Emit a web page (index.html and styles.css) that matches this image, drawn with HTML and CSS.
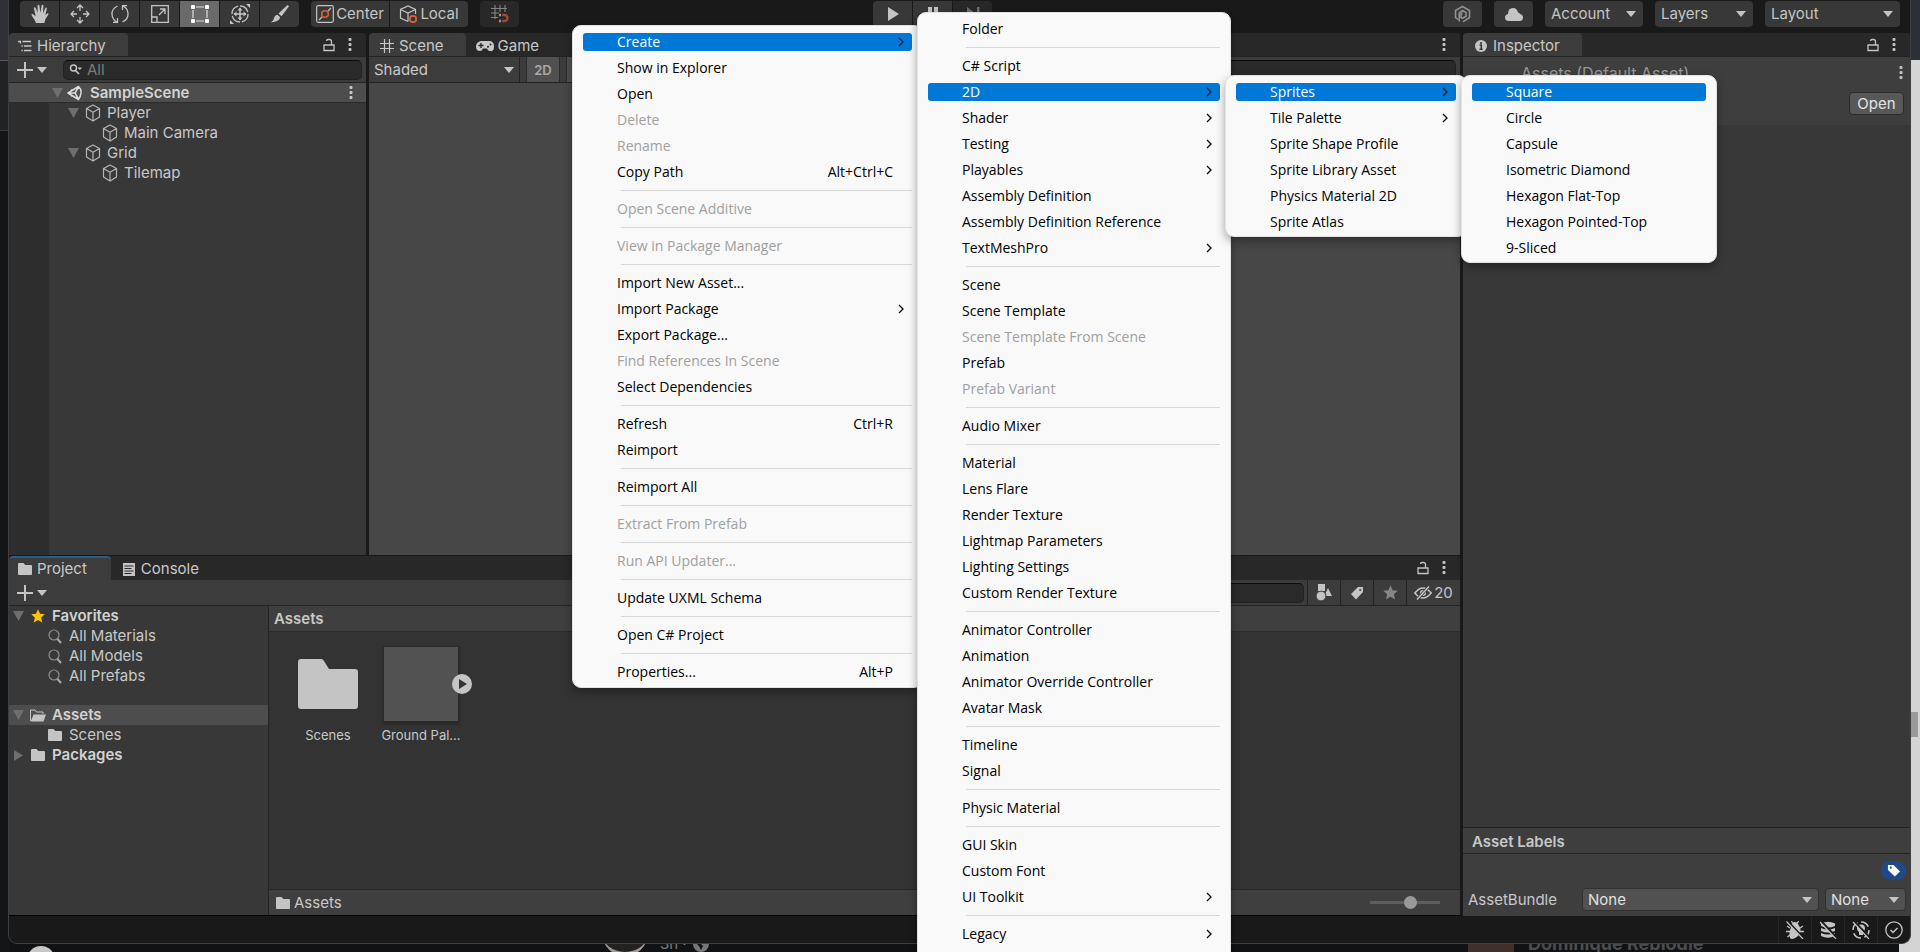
FILE: index.html
```html
<!DOCTYPE html>
<html lang="en">
<head>
<meta charset="utf-8">
<title>Unity Editor</title>
<link rel="stylesheet" href="styles.css">
</head>
<body>
<svg class="sprite" aria-hidden="true">
  <symbol id="i-caret" viewBox="0 0 10 6"><path d="M0 0h10L5 6z" fill="currentColor"/></symbol>
  <symbol id="i-fold" viewBox="0 0 11 10"><path d="M0 0h11L5.500 10z" fill="#6e6e6e"/></symbol>
  <symbol id="i-folded" viewBox="0 0 11 11"><path d="M1 0v11L10 5.500z" fill="#6e6e6e"/></symbol>
  <symbol id="i-chev" viewBox="0 0 6 10"><path d="M1 1l4 4-4 4" fill="none" stroke="currentColor" stroke-width="1.300"/></symbol>
  <symbol id="i-dots" viewBox="0 0 4 14"><g fill="currentColor"><rect x=".5" y="0" width="3" height="3" rx="1"/><rect x=".5" y="5" width="3" height="3" rx="1"/><rect x=".5" y="10" width="3" height="3" rx="1"/></g></symbol>
  <symbol id="i-lock" viewBox="0 0 12 14"><path d="M1 7h10v5.500H1zM8.500 7V3.500Q8.500 1.500 6.500 1.500H5Q3.500 1.500 3.500 3" fill="none" stroke="currentColor" stroke-width="1.300"/></symbol>
  <symbol id="i-plus" viewBox="0 0 16 16"><path d="M8 0v16M0 8h16" stroke="currentColor" stroke-width="2"/></symbol>
  <symbol id="i-find" viewBox="0 0 14 12"><circle cx="4.500" cy="4" r="3" fill="none" stroke="currentColor" stroke-width="1.400"/><path d="M6.500 6.500L10 10" stroke="currentColor" stroke-width="1.600"/><path d="M8.500 3.500h4.500L10.800 6z" fill="currentColor"/></symbol>
  <symbol id="i-query" viewBox="0 0 14 15"><circle cx="6" cy="6" r="5" fill="none" stroke="#8d8d8d" stroke-width="1.200"/><path d="M9.500 10l3.500 4" stroke="#a9a9a9" stroke-width="2"/></symbol>
  <symbol id="i-folder" viewBox="0 0 14 12"><path d="M0 1Q0 0 1 0h4.500l1.800 2H13q1 0 1 1v8q0 1-1 1H1q-1 0-1-1z" fill="#c4c4c4"/></symbol>
  <symbol id="i-open" viewBox="0 0 16 13"><path d="M.5 12V1h4.500l1.500 2H13v2" fill="none" stroke="#c4c4c4"/><path d="M3.500 5.500H16L13.500 12.500H.8z" fill="#c4c4c4"/></symbol>
  <symbol id="i-cube" viewBox="0 0 16 18"><path d="M8 1l6.500 3.500v8.500L8 17l-6.500-4V4.500zM1.500 4.500L8 8.300l6.500-3.800M8 8.300V17" fill="none" stroke="#b4b4b4" stroke-width="1.200" stroke-linejoin="round"/></symbol>
  <symbol id="i-unity" viewBox="0 0 16 16"><path d="M1 8L11.500 1.500Q14.500 4 14 8T11.500 14.500zM1 8h7M8 8l3.500-6M8 8l3.500 6M5 4.800L2 8l3 3.200" fill="none" stroke="#dcdcdc" stroke-width="1.500" stroke-linejoin="round"/></symbol>
  <symbol id="i-tree" viewBox="0 0 14 12"><path d="M0 1.500h3M4.500 1.500H13M6 6h7.500M6 10.500h7.500M3.500 6h1.300M3.500 10.500h1.300M2.500 2v1.500" stroke="currentColor" stroke-width="1.300"/></symbol>
  <symbol id="i-grid" viewBox="0 0 14 14"><path d="M4.500 0v14M9.500 0v14M0 4.500h14M0 9.500h14" stroke="currentColor" stroke-width="1.200"/></symbol>
  <symbol id="i-pad" viewBox="0 0 18 12"><path d="M5 1h8q5 0 5 5.500T14 11q-2 0-3-2.500H7Q6 11 4 11 0 11 0 6.500T5 1z" fill="currentColor"/><path d="M5 3v5M2.500 5.500h5" stroke="#282828" stroke-width="1.400"/><circle cx="12" cy="6.800" r="1" fill="#282828"/><circle cx="14.500" cy="4.500" r="1" fill="#282828"/></symbol>
  <symbol id="i-doc" viewBox="0 0 12 13"><path d="M0 0h12v13H0z" fill="#c4c4c4"/><path d="M1.500 3h9M1.500 5.500h7M1.500 8h9M1.500 10.500h7" stroke="#282828"/></symbol>
  <symbol id="i-info" viewBox="0 0 12 12"><circle cx="6" cy="6" r="6" fill="#c4c4c4"/><path d="M6 2v2M4.500 5h1.800v4M4.500 9.300h3" stroke="#333" stroke-width="1.500" fill="none"/></symbol>
  <symbol id="i-star" viewBox="0 0 14 14"><path d="M7 .3l2 4.500 4.800.5-3.600 3.300 1 4.900L7 11l-4.200 2.500 1-4.900L.2 5.300 5 4.800z" fill="currentColor"/></symbol>
  <symbol id="i-tag" viewBox="0 0 14 14"><path d="M8 1h4.500q.5 0 .5.500V6L6 13.500 1 8z" fill="currentColor"/><circle cx="10.200" cy="4" r="1" fill="#3c3c3c"/></symbol>
  <symbol id="i-shapes" viewBox="0 0 16 17"><path d="M2 0h7v7H2z" fill="currentColor"/><circle cx="5" cy="12" r="4.800" fill="currentColor" stroke="#3c3c3c" stroke-width=".8"/><path d="M12 4l4 8h-5.500l-.8-3z" fill="currentColor"/></symbol>
  <symbol id="i-eye" viewBox="0 0 18 14"><path d="M.8 7Q5 2 9 2t8.200 5Q13 12 9 12T.8 7z" fill="none" stroke="currentColor" stroke-width="1.500"/><circle cx="9" cy="7" r="3" fill="currentColor"/><path d="M2.500 14L15.500 0" stroke="#3c3c3c" stroke-width="3"/><path d="M3 13.500L15 .5" stroke="currentColor" stroke-width="1.500"/></symbol>
  <symbol id="i-hand" viewBox="0 0 18 20"><path d="M5 19Q4 16 1.800 13.200L.3 10.600q.8-1.200 2.200-.1L4.800 12.500 2.900 4.200q.3-1.400 1.700-.5L6.700 9 6.500 1.500Q7.300.2 8.400 1.400L9.300 8.700 10.700 1.200q1-1 1.800.3L12 9.300l2.500-5.600q1.300-.5 1.400.7L14.300 11l2.200-1.800q1.200-.2 1 1.100L14.500 15l-1.200 4z" fill="currentColor"/></symbol>
  <symbol id="i-move" viewBox="0 0 20 20"><path d="M10 1v6M10 13v6M1 10h6M13 10h6M7 4l3-3 3 3M7 16l3 3 3-3M4 7l-3 3 3 3M16 7l3 3-3 3" fill="none" stroke="currentColor" stroke-width="1.300"/></symbol>
  <symbol id="i-rot" viewBox="0 0 20 20"><path d="M7.500 2Q1.500 5 2 10.500T7 18M3 18.300h4.500V14M12.500 18Q18.500 15 18 9.500T13 2M17 1.700h-4.500V6" fill="none" stroke="currentColor" stroke-width="1.300"/></symbol>
  <symbol id="i-scale" viewBox="0 0 18 18"><path d="M.7.700h16.600v16.600H.7zM.7 12H6v5.300M8 10l5.500-5.500M9 4h5v5" fill="none" stroke="currentColor" stroke-width="1.300"/></symbol>
  <symbol id="i-rect" viewBox="0 0 18 18"><path d="M5 2h8M5 16h8M2 5v8M16 5v8" stroke="#ddd" stroke-width="1.200"/><g fill="#fff"><rect width="4" height="4" rx="1"/><rect x="14" width="4" height="4" rx="1"/><rect y="14" width="4" height="4" rx="1"/><rect x="14" y="14" width="4" height="4" rx="1"/></g></symbol>
  <symbol id="i-trs" viewBox="0 0 20 20"><circle cx="10" cy="10" r="8" fill="none" stroke="currentColor" stroke-width="1.300" stroke-dasharray="10.500 2"/><path d="M10 4v12M4 10h12" stroke="currentColor" stroke-width="1.500"/><path d="M7.500 6.500L10 3.500l2.500 3zM7.500 13.500l2.500 3 2.500-3zM6.500 7.500L3.500 10l3 2.500zM13.500 7.500l3 2.500-3 2.500z" fill="currentColor"/><path d="M16 0h4v4zM0 16v4h4z" fill="currentColor"/></symbol>
  <symbol id="i-brush" viewBox="0 0 18 18"><path d="M16.500 0l1.500 1.200-7.500 10-3-2.600zM6.500 9.800l2.700 2.400Q8.500 16.500 0 17.500 3 15.500 3.200 12.500 4 10 6.500 9.800z" fill="currentColor"/></symbol>
  <symbol id="i-pivot" viewBox="0 0 18 18"><rect x=".7" y=".7" width="16.600" height="16.600" rx="1.500" fill="none" stroke="#c4c4c4" stroke-width="1.200"/><circle cx="9" cy="9" r="3.300" fill="none" stroke="#e0603a" stroke-width="1.600"/><path d="M3 15l3-3M12 6l3-3" stroke="#c4c4c4" stroke-width="1.300"/></symbol>
  <symbol id="i-local" viewBox="0 0 19 19"><path d="M9 16.500L1.500 13V4.500L9 1l7.500 3.500V9M1.500 4.500L9 8l7.500-3.500M9 8v8.500" fill="none" stroke="#c4c4c4" stroke-width="1.200"/><circle cx="14" cy="14" r="3.200" fill="#383838" stroke="#e0603a" stroke-width="1.700"/></symbol>
  <symbol id="i-snap" viewBox="0 0 18 18"><path d="M4 0v14M9 0v7M14 0v7M0 3.500h16M0 8h8M0 12.500h7" stroke="#848484" stroke-width="1.100" fill="none"/><path d="M11 10h2.500a3 3 0 010 6H11" fill="none" stroke="#9c4a33" stroke-width="2.400"/><path d="M9 8.800v2.400M9 14.800v2.400" stroke="#999" stroke-width="2"/></symbol>
  <symbol id="i-play" viewBox="0 0 12 14"><path d="M1 0l11 7-11 7z" fill="currentColor"/></symbol>
  <symbol id="i-pause" viewBox="0 0 12 14"><path d="M1 0h4v14H1zM7 0h4v14H7z" fill="currentColor"/></symbol>
  <symbol id="i-step" viewBox="0 0 14 14"><path d="M1 0l9 7-9 7zM11 0h2.500v14H11z" fill="currentColor"/></symbol>
  <symbol id="i-plastic" viewBox="0 0 17 18"><path d="M4 14.500L1.500 12.500v-7L8.500 1.500l7 4v7L9 16.800M5.200 16.500V7.800L8.500 5.500l3.500 2v3.800L8.500 13.300l-1.500-.8V9l1.500-1" fill="none" stroke="#8f8f8f" stroke-width="1.600"/></symbol>
  <symbol id="i-cloud" viewBox="0 0 18 13"><path d="M4 13Q0 13 0 9.500 0 6.500 3 6 3 0 8 0 12 0 13 4.500 14.500 4.500 15 6 18 6.500 18 9.500 18 13 14.500 13z" fill="#c4c4c4"/></symbol>
  <symbol id="i-bug" viewBox="0 0 18 18"><path d="M9 1Q12 1 12.500 4 14.500 6 14.500 10T9 17 3.500 14 3.500 10 5.500 4Q6 1 9 1z" fill="#c4c4c4"/><path d="M1 5l3 2M17 5l-3 2M0 10.500h4M14 10.500h4M1.500 16l3-2.500M16.500 16l-3-2.500M5.500 0l1 2M12.500 0l-1 2" stroke="#c4c4c4" stroke-width="1.300"/><path d="M1.500 0l16 17" stroke="#191919" stroke-width="2"/><path d="M.5.500l16.500 17.500" stroke="#c4c4c4" stroke-width="1.200"/></symbol>
  <symbol id="i-db" viewBox="0 0 18 18"><path d="M2 2.500Q9-1 16 2.500V5Q9 8 2 5zM2 7q7 3 14 0v3q-7 3-14 0zM2 12q7 3 14 0v3q-7 3.500-14 0z" fill="#c4c4c4"/><path d="M2 0l16 17" stroke="#191919" stroke-width="2.200"/><path d="M1 1l16 17" stroke="#c4c4c4" stroke-width="1.200"/></symbol>
  <symbol id="i-gi" viewBox="0 0 18 18"><circle cx="9" cy="9" r="8" fill="none" stroke="#c4c4c4" stroke-width="1.500" stroke-dasharray="9 3.500"/><path d="M9 3.500q4 0 4 4 0 2-2 3.500V14H7v-3Q5 9.500 5 7.500q0-4 4-4z" fill="#c4c4c4"/><path d="M2 0l16 17" stroke="#191919" stroke-width="2"/><path d="M1 1l16 17" stroke="#c4c4c4" stroke-width="1.200"/></symbol>
  <symbol id="i-ok" viewBox="0 0 18 18"><circle cx="9" cy="9" r="8.200" fill="none" stroke="#c4c4c4" stroke-width="1.300"/><path d="M5.500 9l2.500 2.500 4.500-4.500" fill="none" stroke="#c4c4c4" stroke-width="1.500"/></symbol>
</svg>

<div class="backdrop" aria-hidden="true">
  <div class="back-left"></div>
  <div class="back-right"><div class="back-thumb"></div></div>
  <div class="back-disc"></div>
  <div class="back-post"><span class="back-avatar"></span><span>3h ·</span><svg width="16" height="16" viewBox="0 0 16 16"><circle cx="8" cy="8" r="8" fill="#777"/><path d="M4 3l5 1-2 3 3 3-2 4-2-4-3-3z" fill="#111"/></svg></div>
  <div class="back-name"><span class="back-photo"></span><span>Dominique Reblodie</span></div>
</div>

<div class="editor">
  <header class="toolbar">
    <div class="group">
      <button class="tool" aria-label="Hand"><svg width="18" height="20"><use href="#i-hand"/></svg></button>
      <button class="tool" aria-label="Move"><svg width="20" height="20"><use href="#i-move"/></svg></button>
      <button class="tool" aria-label="Rotate"><svg width="20" height="20"><use href="#i-rot"/></svg></button>
      <button class="tool" aria-label="Scale"><svg width="18" height="18"><use href="#i-scale"/></svg></button>
      <button class="tool tool-on" aria-label="Rect"><svg width="18" height="18"><use href="#i-rect"/></svg></button>
      <button class="tool" aria-label="Transform"><svg width="20" height="20"><use href="#i-trs"/></svg></button>
      <button class="tool" aria-label="Custom"><svg width="18" height="18"><use href="#i-brush"/></svg></button>
    </div>
    <div class="group">
      <button class="tool tool-text"><svg width="18" height="18"><use href="#i-pivot"/></svg>Center</button>
      <button class="tool tool-text"><svg width="19" height="19"><use href="#i-local"/></svg>Local</button>
    </div>
    <div class="group"><button class="tool tool-off" aria-label="Snap"><svg width="18" height="18"><use href="#i-snap"/></svg></button></div>
    <div class="gap-a"></div>
    <div class="group">
      <button class="tool" aria-label="Play"><svg width="12" height="14"><use href="#i-play"/></svg></button>
      <button class="tool" aria-label="Pause"><svg width="12" height="14"><use href="#i-pause"/></svg></button>
      <button class="tool tool-off" aria-label="Step"><svg width="14" height="14"><use href="#i-step"/></svg></button>
    </div>
    <div class="gap-b"></div>
    <button class="tool tool-solo" aria-label="Plastic SCM"><svg width="17" height="18"><use href="#i-plastic"/></svg></button>
    <button class="tool tool-solo" aria-label="Cloud"><svg width="18" height="13"><use href="#i-cloud"/></svg></button>
    <button class="tool tool-drop">Account<svg width="10" height="6"><use href="#i-caret"/></svg></button>
    <button class="tool tool-drop">Layers<svg width="10" height="6"><use href="#i-caret"/></svg></button>
    <button class="tool tool-drop tool-wide">Layout<svg width="10" height="6"><use href="#i-caret"/></svg></button>
  </header>

  <main class="dock">
    <div class="dock-main">
      <div class="dock-top">
        <section class="panel hierarchy">
          <div class="tabs">
            <button class="tab tab-on"><svg width="14" height="12"><use href="#i-tree"/></svg>Hierarchy</button>
            <span class="tabs-end"><svg width="12" height="14"><use href="#i-lock"/></svg><svg width="4" height="14"><use href="#i-dots"/></svg></span>
          </div>
          <div class="bar">
            <button class="add" aria-label="Create"><svg width="16" height="16"><use href="#i-plus"/></svg><svg width="10" height="6"><use href="#i-caret"/></svg></button>
            <label class="search"><svg width="14" height="12"><use href="#i-find"/></svg><input type="text" placeholder="All" aria-label="Search hierarchy"></label>
          </div>
          <div class="scene-row"><svg width="11" height="10"><use href="#i-fold"/></svg><svg width="16" height="16"><use href="#i-unity"/></svg><b>SampleScene</b><svg class="end" width="4" height="14"><use href="#i-dots"/></svg></div>
          <div class="scene-tree">
            <ul class="objects">
              <li class="obj"><svg width="11" height="10"><use href="#i-fold"/></svg><svg width="16" height="18"><use href="#i-cube"/></svg>Player</li>
              <li class="obj obj-child"><svg width="16" height="18"><use href="#i-cube"/></svg>Main Camera</li>
              <li class="obj"><svg width="11" height="10"><use href="#i-fold"/></svg><svg width="16" height="18"><use href="#i-cube"/></svg>Grid</li>
              <li class="obj obj-child"><svg width="16" height="18"><use href="#i-cube"/></svg>Tilemap</li>
            </ul>
          </div>
        </section>
        <section class="panel scene">
          <div class="tabs">
            <button class="tab tab-on tab-scene"><svg width="14" height="14"><use href="#i-grid"/></svg>Scene</button>
            <button class="tab tab-game"><svg width="18" height="12"><use href="#i-pad"/></svg>Game</button>
            <span class="tabs-end"><svg width="4" height="14"><use href="#i-dots"/></svg></span>
          </div>
          <div class="bar bar-scene">
            <button class="shading">Shaded<svg width="10" height="6"><use href="#i-caret"/></svg></button>
            <button class="mode">2D</button>
            <button class="mode" aria-label="Lighting"></button>
            <label class="search search-scene"><input type="text" placeholder="All" aria-label="Search scene"></label>
          </div>
          <div class="viewport"></div>
        </section>
      </div>
      <section class="panel project">
        <div class="tabs">
          <button class="tab tab-on tab-focus"><svg width="14" height="12"><use href="#i-folder"/></svg>Project</button>
          <button class="tab tab-console"><svg width="12" height="13"><use href="#i-doc"/></svg>Console</button>
          <span class="tabs-end"><svg width="12" height="14"><use href="#i-lock"/></svg><svg width="4" height="14"><use href="#i-dots"/></svg></span>
        </div>
        <div class="bar bar-project">
          <button class="add" aria-label="Create asset"><svg width="16" height="16"><use href="#i-plus"/></svg><svg width="10" height="6"><use href="#i-caret"/></svg></button>
          <label class="search search-project"><input type="text" aria-label="Search project"></label>
          <button class="filter" aria-label="Search by type"><svg width="16" height="17"><use href="#i-shapes"/></svg></button>
          <button class="filter" aria-label="Search by label"><svg width="14" height="14"><use href="#i-tag"/></svg></button>
          <button class="filter filter-dim" aria-label="Save search"><svg width="15" height="15"><use href="#i-star"/></svg></button>
          <button class="filter filter-count"><svg width="18" height="14"><use href="#i-eye"/></svg>20</button>
        </div>
        <div class="browser">
          <ul class="folders">
            <li class="node"><svg width="11" height="10"><use href="#i-fold"/></svg><svg class="gold" width="14" height="14"><use href="#i-star"/></svg><b>Favorites</b></li>
            <li class="node node-child"><svg width="14" height="15"><use href="#i-query"/></svg>All Materials</li>
            <li class="node node-child"><svg width="14" height="15"><use href="#i-query"/></svg>All Models</li>
            <li class="node node-child"><svg width="14" height="15"><use href="#i-query"/></svg>All Prefabs</li>
            <li class="node node-on"><svg width="11" height="10"><use href="#i-fold"/></svg><svg width="16" height="13"><use href="#i-open"/></svg><b>Assets</b></li>
            <li class="node node-child"><svg width="14" height="12"><use href="#i-folder"/></svg>Scenes</li>
            <li class="node"><svg width="11" height="11"><use href="#i-folded"/></svg><svg width="14" height="12"><use href="#i-folder"/></svg><b>Packages</b></li>
          </ul>
          <div class="contents">
            <div class="crumbs">Assets</div>
            <div class="assets">
              <figure class="asset"><div class="thumb"><svg width="60" height="50" viewBox="0 0 60 50"><path d="M0 3Q0 0 3 0h20q2 0 3 2l5 8h26q3 0 3 3v34q0 3-3 3H3q-3 0-3-3z" fill="#c4c4c4"/></svg></div><figcaption>Scenes</figcaption></figure>
              <figure class="asset"><div class="thumb thumb-tile"><svg class="expand" width="20" height="20" viewBox="0 0 20 20"><circle cx="10" cy="10" r="10" fill="#c4c4c4"/><path d="M7 5l8 5-8 5z" fill="#333"/></svg></div><figcaption>Ground Pal...</figcaption></figure>
            </div>
            <div class="path"><svg width="14" height="12"><use href="#i-folder"/></svg>Assets<input class="zoom" type="range" min="0" max="100" value="60" aria-label="Icon size"></div>
          </div>
        </div>
      </section>
    </div>

    <section class="panel inspector">
      <div class="tabs">
        <button class="tab tab-on tab-info"><svg width="12" height="12"><use href="#i-info"/></svg>Inspector</button>
        <span class="tabs-end"><svg width="12" height="14"><use href="#i-lock"/></svg><svg width="4" height="14"><use href="#i-dots"/></svg></span>
      </div>
      <div class="asset-head">
        <div class="asset-title"><svg class="asset-icon" width="14" height="12"><use href="#i-folder"/></svg><span>Assets (Default Asset)</span><svg class="end" width="4" height="14"><use href="#i-dots"/></svg></div>
        <button class="open">Open</button>
      </div>
      <div class="inspector-body"></div>
      <div class="labels-head">Asset Labels</div>
      <div class="labels-body">
        <button class="label-add" aria-label="Add label"><svg width="13" height="13" viewBox="0 0 14 14"><path d="M1 1h6l7 7-5.500 5.500L1 6.500z" fill="#fff"/><circle cx="4" cy="4" r="1.200" fill="#204a87"/></svg></button>
        <div class="bundle">
          <label for="bundle">AssetBundle</label>
          <span class="pick pick-grow"><select id="bundle"><option>None</option></select><svg width="10" height="6"><use href="#i-caret"/></svg></span>
          <span class="pick"><select aria-label="AssetBundle variant"><option>None</option></select><svg width="10" height="6"><use href="#i-caret"/></svg></span>
        </div>
      </div>
    </section>
  </main>

  <footer class="status">
    <button class="state" aria-label="Debugger"><svg width="18" height="18"><use href="#i-bug"/></svg></button>
    <button class="state" aria-label="Cache server"><svg width="18" height="18"><use href="#i-db"/></svg></button>
    <button class="state" aria-label="Auto generate lighting"><svg width="18" height="18"><use href="#i-gi"/></svg></button>
    <button class="state" aria-label="Activity"><svg width="18" height="18"><use href="#i-ok"/></svg></button>
  </footer>
</div>

<ul class="menu menu-assets" role="menu">
  <li><button class="item item-on">Create<svg width="6" height="10"><use href="#i-chev"/></svg></button></li>
  <li><button class="item">Show in Explorer</button></li>
  <li><button class="item">Open</button></li>
  <li><button class="item" disabled>Delete</button></li>
  <li><button class="item" disabled>Rename</button></li>
  <li><button class="item">Copy Path<kbd>Alt+Ctrl+C</kbd></button></li>
  <li class="rule"></li>
  <li><button class="item" disabled>Open Scene Additive</button></li>
  <li class="rule"></li>
  <li><button class="item" disabled>View in Package Manager</button></li>
  <li class="rule"></li>
  <li><button class="item">Import New Asset...</button></li>
  <li><button class="item">Import Package<svg width="6" height="10"><use href="#i-chev"/></svg></button></li>
  <li><button class="item">Export Package...</button></li>
  <li><button class="item" disabled>Find References In Scene</button></li>
  <li><button class="item">Select Dependencies</button></li>
  <li class="rule"></li>
  <li><button class="item">Refresh<kbd>Ctrl+R</kbd></button></li>
  <li><button class="item">Reimport</button></li>
  <li class="rule"></li>
  <li><button class="item">Reimport All</button></li>
  <li class="rule"></li>
  <li><button class="item" disabled>Extract From Prefab</button></li>
  <li class="rule"></li>
  <li><button class="item" disabled>Run API Updater...</button></li>
  <li class="rule"></li>
  <li><button class="item">Update UXML Schema</button></li>
  <li class="rule"></li>
  <li><button class="item">Open C# Project</button></li>
  <li class="rule"></li>
  <li><button class="item">Properties...<kbd>Alt+P</kbd></button></li>
</ul>

<ul class="menu menu-create" role="menu">
  <li><button class="item">Folder</button></li>
  <li class="rule"></li>
  <li><button class="item">C# Script</button></li>
  <li><button class="item item-on">2D<svg width="6" height="10"><use href="#i-chev"/></svg></button></li>
  <li><button class="item">Shader<svg width="6" height="10"><use href="#i-chev"/></svg></button></li>
  <li><button class="item">Testing<svg width="6" height="10"><use href="#i-chev"/></svg></button></li>
  <li><button class="item">Playables<svg width="6" height="10"><use href="#i-chev"/></svg></button></li>
  <li><button class="item">Assembly Definition</button></li>
  <li><button class="item">Assembly Definition Reference</button></li>
  <li><button class="item">TextMeshPro<svg width="6" height="10"><use href="#i-chev"/></svg></button></li>
  <li class="rule"></li>
  <li><button class="item">Scene</button></li>
  <li><button class="item">Scene Template</button></li>
  <li><button class="item" disabled>Scene Template From Scene</button></li>
  <li><button class="item">Prefab</button></li>
  <li><button class="item" disabled>Prefab Variant</button></li>
  <li class="rule"></li>
  <li><button class="item">Audio Mixer</button></li>
  <li class="rule"></li>
  <li><button class="item">Material</button></li>
  <li><button class="item">Lens Flare</button></li>
  <li><button class="item">Render Texture</button></li>
  <li><button class="item">Lightmap Parameters</button></li>
  <li><button class="item">Lighting Settings</button></li>
  <li><button class="item">Custom Render Texture</button></li>
  <li class="rule"></li>
  <li><button class="item">Animator Controller</button></li>
  <li><button class="item">Animation</button></li>
  <li><button class="item">Animator Override Controller</button></li>
  <li><button class="item">Avatar Mask</button></li>
  <li class="rule"></li>
  <li><button class="item">Timeline</button></li>
  <li><button class="item">Signal</button></li>
  <li class="rule"></li>
  <li><button class="item">Physic Material</button></li>
  <li class="rule"></li>
  <li><button class="item">GUI Skin</button></li>
  <li><button class="item">Custom Font</button></li>
  <li><button class="item">UI Toolkit<svg width="6" height="10"><use href="#i-chev"/></svg></button></li>
  <li class="rule"></li>
  <li><button class="item">Legacy<svg width="6" height="10"><use href="#i-chev"/></svg></button></li>
  <li class="rule"></li>
</ul>

<ul class="menu menu-2d" role="menu">
  <li><button class="item item-on">Sprites<svg width="6" height="10"><use href="#i-chev"/></svg></button></li>
  <li><button class="item">Tile Palette<svg width="6" height="10"><use href="#i-chev"/></svg></button></li>
  <li><button class="item">Sprite Shape Profile</button></li>
  <li><button class="item">Sprite Library Asset</button></li>
  <li><button class="item">Physics Material 2D</button></li>
  <li><button class="item">Sprite Atlas</button></li>
</ul>

<ul class="menu menu-sprites" role="menu">
  <li><button class="item item-on">Square</button></li>
  <li><button class="item">Circle</button></li>
  <li><button class="item">Capsule</button></li>
  <li><button class="item">Isometric Diamond</button></li>
  <li><button class="item">Hexagon Flat-Top</button></li>
  <li><button class="item">Hexagon Pointed-Top</button></li>
  <li><button class="item">9-Sliced</button></li>
</ul>
</body>
</html>
```
FILE: styles.css
```css
* { box-sizing: border-box; }
body {
  margin: 0;
  height: 100vh;
  overflow: hidden;
  position: relative;
  background: #111213;
  color: #c8c8c8;
  font: 15px/20px Inter, "Liberation Sans", sans-serif;
}
ul { margin: 0; padding: 0; list-style: none; }
button, input, select { font: inherit; color: inherit; margin: 0; padding: 0; border: 0; background: none; }
button { display: flex; align-items: center; }
svg { display: block; flex: none; }
b { font-weight: 600; color: #d2d2d2; }
.sprite { position: absolute; width: 0; height: 0; }
.end { margin-left: auto; }

/* desktop behind the editor */
.backdrop { position: absolute; inset: 0; overflow: hidden; }
.back-left {
  position: absolute; left: 0; top: 0; bottom: 0; width: 9px;
  background: linear-gradient(#2f3137 60px, #5a5a5c 60px, #5a5a5c 61px, #212224 61px, #212224 130px, #38393a 130px, #38393a 131px, #141517 131px);
}
.back-right {
  position: absolute; right: 0; top: 0; bottom: 0; width: 21px;
  background: linear-gradient(#2c2f36 60px, #d4d4d4 60px);
}
.back-thumb { position: absolute; right: 2px; top: 712px; width: 8px; height: 25px; background: #9a9a9a; }
.back-disc { position: absolute; left: 27px; bottom: -22px; width: 28px; height: 28px; border-radius: 50%; background: #c8c8c8; }
.back-post { position: absolute; left: 602px; bottom: -4px; display: flex; align-items: center; gap: 6px; color: #7c7c7c; }
.back-avatar { width: 46px; height: 46px; margin: -22px 6px 0 0; border-radius: 50%; background: #222; border-bottom: 4px solid #a89a90; }
.back-name { position: absolute; left: 1468px; bottom: -4px; display: flex; align-items: center; gap: 14px; color: #4c4c4e; font-size: 18px; font-weight: 700; }
.back-photo { width: 46px; height: 24px; background: #40302c; }

/* editor window */
.editor {
  position: relative;
  display: flex;
  flex-direction: column;
  height: calc(100vh - 8px);
  margin: 0 9px 0 8px;
  border: 1px solid #3f3f3f;
  border-top: 0;
  border-radius: 0 0 9px 9px;
  background: #191919;
  overflow: hidden;
}
.toolbar { display: flex; gap: 12px; padding: 1px 10px 6px 11px; }
.group { display: flex; gap: 1px; }
.tool { width: 39px; height: 26px; justify-content: center; background: #383838; color: #c4c4c4; white-space: nowrap; }
.group .tool:first-child { border-radius: 4px 0 0 4px; }
.group .tool:last-child { border-radius: 0 4px 4px 0; }
.group .tool:only-child, .tool-solo, .tool-drop { border-radius: 4px; }
.tool-on { background: #6a6a6a; }
.tool-text { width: 78px; gap: 2px; }
.tool-off { background: #282828; color: #6d6d6d; }
.tool-drop { width: 98px; justify-content: space-between; padding: 0 7px 0 6px; }
.tool-wide { width: 135px; }
.gap-a { flex: 41 1 0; }
.gap-b { flex: 53 1 0; }

.dock { flex: 1; display: flex; gap: 3px; min-height: 0; }
.dock-main { flex: 1; display: flex; flex-direction: column; gap: 1px; min-width: 0; border-bottom: 1px solid #000; }
.dock-top { flex: 523 1 0; display: flex; gap: 3px; min-height: 0; }
.panel { display: flex; flex-direction: column; background: #383838; border-radius: 4px 4px 0 0; overflow: hidden; }
.hierarchy { width: 357px; }
.scene { flex: 1; }
.project { flex: 359 1 0; }
.inspector { width: 447px; }

.tabs { display: flex; height: 24px; flex: none; background: #282828; }
.tab { gap: 5px; padding: 2px 20px 0 9px; }
.tab-on { background: #3c3c3c; border-radius: 4px 4px 0 0; }
.hierarchy .tab { padding-right: 22px; }
.tab-scene { padding: 2px 22px 0 11px; }
.tab-game { gap: 4px; padding-left: 10px; }
.tab-focus { padding: 0 24px 0 9px; border-top: 2px solid #2c5d87; }
.tab-console { padding-left: 12px; gap: 6px; }
.tab-info { padding: 2px 22px 0 12px; gap: 6px; }
.tabs-end { display: flex; align-items: center; gap: 13px; margin-left: auto; padding: 0 14px; color: #c4c4c4; }
.scene .tabs, .hierarchy .tabs, .inspector .tabs { border-bottom: 1px solid #232323; }

.bar { display: flex; align-items: center; height: 26px; flex: none; padding: 0 4px 0 8px; background: #3c3c3c; border-bottom: 1px solid #232323; }
.add { gap: 4px; width: 46px; color: #c4c4c4; }
.search { display: flex; align-items: center; gap: 4px; flex: 1; height: 20px; padding: 0 5px; background: #2a2a2a; border: 1px solid #212121; border-top-color: #0d0d0d; border-radius: 5px; }
.search input { flex: 1; min-width: 0; height: 18px; outline: 0; }
.search input::placeholder { color: #7b7b7b; opacity: 1; }
.bar-scene { padding: 0 4px 0 5px; }
.shading { width: 146px; height: 25px; justify-content: space-between; padding-right: 5px; border-right: 1px solid #232323; }
.mode { justify-content: center; width: 34px; height: 25px; margin-left: 6px; background: #505050; border: 1px solid #2c2c2c; border-width: 0 1px; color: #a8a8a8; font-size: 13px; font-weight: 600; }
.search-scene { flex: 0 1 260px; margin-left: auto; padding-left: 26px; }
.viewport { flex: 1; background: #474747; }

.scene-row { display: flex; align-items: center; height: 20px; flex: none; padding: 0 13px 0 43px; background: #4d4d4d; border-bottom: 1px solid #2b2b2b; }
.scene-row svg + svg { margin-left: 4px; }
.scene-row b { margin-left: 7px; }
.scene-row .end { margin-left: auto; }
.scene-tree { flex: 1; padding-left: 40px; background: #2d2d2d; display: flex; }
.objects { flex: 1; background: #383838; }
.obj { display: flex; align-items: center; gap: 6px; height: 20px; padding-left: 19px; }
.obj-child { padding-left: 53px; }

.browser { flex: 1; display: flex; min-height: 0; }
.folders { width: 259px; }
.node { display: flex; align-items: center; gap: 7px; height: 20px; padding-left: 4px; }
.node-child { padding-left: 39px; }
.node-on { margin-top: 19px; background: #4d4d4d; gap: 6px; }
.gold { color: #ffc107; }
.bar-project { padding-right: 0; }
.search-project { flex: 0 1 700px; margin: 0 3px 0 auto; }
.filter { justify-content: center; width: 33px; height: 25px; border-left: 1px solid #232323; color: #c4c4c4; }
.filter-dim { color: #858585; }
.filter-count { width: 54px; gap: 2px; }
.contents { flex: 1; display: flex; flex-direction: column; background: #333; border-left: 1px solid #232323; }
.crumbs { height: 26px; padding: 3px 5px; background: #3f3f3f; border-bottom: 1px solid #2b2b2b; font-weight: 600; }
.assets { flex: 1; display: flex; gap: 13px; padding: 14px 19px; }
.asset { width: 80px; margin: 0; text-align: center; font-size: 13px; }
.thumb { position: relative; display: flex; align-items: center; justify-content: center; height: 76px; margin: 0 2px 3px; }
.thumb-tile { background: #525252; border: 1px solid #2a2a2a; box-shadow: 0 2px 3px #262626; }
.expand { position: absolute; right: -14px; top: 27px; }
.path { display: flex; align-items: center; gap: 4px; height: 26px; padding: 0 20px 0 7px; background: #3f3f3f; border-top: 1px solid #272727; }
.zoom { appearance: none; width: 70px; height: 14px; margin-left: auto; background: linear-gradient(#5e5e5e, #5e5e5e) center / 100% 3px no-repeat; }
.zoom::-webkit-slider-thumb { appearance: none; width: 13px; height: 13px; border-radius: 50%; background: #999; }

.asset-head { height: 68px; flex: none; padding: 6px 6px 0 11px; background: #3e3e3e; }
.asset-title { display: flex; align-items: center; gap: 33px; padding-right: 1px; color: #969696; font-size: 16px; }
.asset-icon { margin-top: 14px; margin-bottom: -6px; }
.asset-title .end { color: #c4c4c4; }
.open { justify-content: center; width: 55px; height: 23px; margin: 9px 0 0 auto; background: #585858; border: 1px solid #2b2b2b; border-radius: 4px; color: #e4e4e4; }
.inspector-body { flex: 1; }
.labels-head { height: 27px; padding: 4px 9px; background: #3e3e3e; border: 1px solid #232323; border-width: 1px 0; font-weight: 600; }
.labels-body { background: #3e3e3e; padding: 7px 4px 5px 5px; }
.label-add { justify-content: center; width: 25px; height: 19px; margin: 0 0 8px auto; background: #204a87; border-radius: 9px; }
.bundle { display: flex; align-items: center; gap: 6px; }
.bundle label { width: 108px; }
.pick { position: relative; width: 81px; }
.pick-grow { width: auto; flex: 1; }
.pick select { appearance: none; display: block; width: 100%; height: 23px; padding: 0 5px; background: #515151; border: 1px solid #303030; border-radius: 4px; color: #e0e0e0; }
.pick svg { position: absolute; right: 7px; top: 9px; pointer-events: none; color: #c4c4c4; }

.status { display: flex; justify-content: flex-end; height: 27px; flex: none; }
.state { justify-content: center; width: 33px; border-left: 1px solid #262626; }

/* popup menus */
.menu { position: absolute; padding: 3px 10px; background: #f9f9f9; border: 1px solid #e2e2e2; border-radius: 9px; box-shadow: 0 4px 10px rgba(0, 0, 0, .35); color: #000; font: 14px/18px "Open Sans", "Noto Sans", sans-serif; }
.menu li { padding: 4px 0; }
.menu .rule { height: 1px; margin: 5px 0 5px 38px; padding: 0; background: #d7d7d7; }
.item { width: 100%; height: 18px; padding: 0 8px 0 34px; border-radius: 3px; white-space: nowrap; }
.item:disabled { color: #a0a0a0; }
.item svg { margin-left: auto; }
.item kbd { margin: 0 11px 0 auto; font: inherit; }
.item-on { background: #0078d7; color: #fff; }
.item-on svg { color: #12202c; }
.menu-assets { left: 572px; top: 25px; width: 351px; padding-bottom: 2px; }
.menu-create { left: 917px; top: 12px; width: 314px; }
.menu-2d { left: 1225px; top: 75px; width: 242px; padding-bottom: 1px; }
.menu-sprites { left: 1461px; top: 75px; width: 256px; padding-bottom: 1px; }
```
